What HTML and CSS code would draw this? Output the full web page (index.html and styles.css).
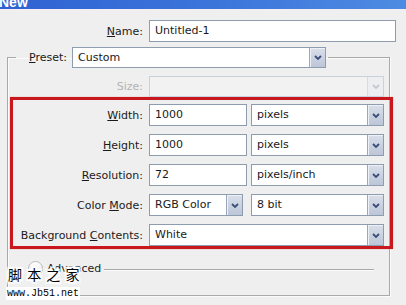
FILE: index.html
```html
<!DOCTYPE html>
<html>
<head>
<meta charset="utf-8">
<link rel="stylesheet" href="styles.css">
</head>
<body>
<div class="window">
  <div class="titlebar"><span class="title">New</span></div>

  <div class="row name-row">
    <span class="lbl name-lbl"><u>N</u>ame:</span>
    <div class="input name-input">Untitled-1</div>
  </div>

  <fieldset class="group">
    <legend class="preset">
      <span class="lbl-inline"><u>P</u>reset:</span>
      <div class="select preset-select">
        <span class="val">Custom</span>
        <span class="btn"><svg width="8" height="5" viewBox="0 0 8 5"><path d="M1 1 L4 4 L7 1" fill="none" stroke="currentColor" stroke-width="1.8"/></svg></span>
      </div>
    </legend>

    <div class="row size-row">
      <span class="lbl g-lbl disabled">Size:</span>
      <div class="select full disabled-select">
        <span class="val"></span>
        <span class="btn"><svg width="8" height="5" viewBox="0 0 8 5"><path d="M1 1 L4 4 L7 1" fill="none" stroke="currentColor" stroke-width="1.8"/></svg></span>
      </div>
    </div>

    <div class="redbox">
      <div class="row">
        <span class="lbl r-lbl"><u>W</u>idth:</span>
        <div class="input num">1000</div>
        <div class="select unit">
          <span class="val">pixels</span>
          <span class="btn"><svg width="8" height="5" viewBox="0 0 8 5"><path d="M1 1 L4 4 L7 1" fill="none" stroke="currentColor" stroke-width="1.8"/></svg></span>
        </div>
      </div>
      <div class="row">
        <span class="lbl r-lbl"><u>H</u>eight:</span>
        <div class="input num">1000</div>
        <div class="select unit">
          <span class="val">pixels</span>
          <span class="btn"><svg width="8" height="5" viewBox="0 0 8 5"><path d="M1 1 L4 4 L7 1" fill="none" stroke="currentColor" stroke-width="1.8"/></svg></span>
        </div>
      </div>
      <div class="row">
        <span class="lbl r-lbl"><u>R</u>esolution:</span>
        <div class="input num">72</div>
        <div class="select unit">
          <span class="val">pixels/inch</span>
          <span class="btn"><svg width="8" height="5" viewBox="0 0 8 5"><path d="M1 1 L4 4 L7 1" fill="none" stroke="currentColor" stroke-width="1.8"/></svg></span>
        </div>
      </div>
      <div class="row">
        <span class="lbl r-lbl">Color <u>M</u>ode:</span>
        <div class="select mode">
          <span class="val">RGB Color</span>
          <span class="btn"><svg width="8" height="5" viewBox="0 0 8 5"><path d="M1 1 L4 4 L7 1" fill="none" stroke="currentColor" stroke-width="1.8"/></svg></span>
        </div>
        <div class="select bits">
          <span class="val">8 bit</span>
          <span class="btn"><svg width="8" height="5" viewBox="0 0 8 5"><path d="M1 1 L4 4 L7 1" fill="none" stroke="currentColor" stroke-width="1.8"/></svg></span>
        </div>
      </div>
      <div class="row">
        <span class="lbl r-lbl">Background <u>C</u>ontents:</span>
        <div class="select full">
          <span class="val">White</span>
          <span class="btn"><svg width="8" height="5" viewBox="0 0 8 5"><path d="M1 1 L4 4 L7 1" fill="none" stroke="currentColor" stroke-width="1.8"/></svg></span>
        </div>
      </div>
    </div>

    <div class="advanced">
      <span class="adv-icon"></span>
      <span class="adv-text">Advanced</span>
      <span class="adv-line"></span>
    </div>
  </fieldset>

  <div class="wm-cn">脚 本 之 家</div>
  <div class="wm-url">www.Jb51.net</div>
</div>
</body>
</html>
```

FILE: styles.css
```css
* { box-sizing: border-box; }
html, body {
  margin: 0;
  padding: 0;
}
body {
  width: 406px;
  height: 305px;
  overflow: hidden;
  background: #efefef;
  font-family: "DejaVu Sans", sans-serif;
  font-size: 11px;
  color: #1a1a1a;
}
.window {
  position: relative;
  width: 406px;
  height: 305px;
}
.titlebar {
  height: 10px;
  overflow: hidden;
  background: linear-gradient(to right, #2e62d2, #3b74da 50%, #4d8be2);
  border-bottom: 1px solid #f6eef2;
}
.title {
  display: block;
  margin-top: -6px;
  margin-left: -1px;
  font-family: "Liberation Sans", sans-serif;
  font-weight: bold;
  font-size: 14px;
  line-height: 16px;
  color: #fff;
}
.row {
  display: flex;
  align-items: center;
}
.lbl {
  text-align: right;
  white-space: nowrap;
  flex: none;
}
u { text-decoration: underline; text-underline-offset: 1px; }

.name-row {
  margin-top: 10px;
  gap: 6px;
}
.name-lbl { width: 143px; }
.input {
  height: 22px;
  background: #fff;
  border: 1px solid #8e9cb0;
  padding: 0 5px;
  line-height: 20px;
  white-space: nowrap;
  overflow: hidden;
  flex: none;
}
.name-input { width: 247px; }

.group {
  margin: 5px 0 0 7px;
  padding: 0;
  width: 383px;
  height: 249px;
  border: 1px solid #a9a9a9;
  box-shadow: inset 1px 1px 0 #fbfbfb, 1px 1px 0 #fbfbfb;
  min-width: 0;
}
.preset {
  display: flex;
  align-items: center;
  gap: 5px;
  margin-left: 8px;
  padding: 0 2px 0 13px;
}
.select {
  display: flex;
  height: 21px;
  background: #fff;
  border: 1px solid #8e9cb0;
  flex: none;
}
.select .val {
  flex: 1;
  padding-left: 5px;
  line-height: 19px;
  white-space: nowrap;
  overflow: hidden;
}
.select .btn {
  width: 16px;
  border-left: 1px solid #9aa6bd;
  background: linear-gradient(#d9dfea, #bcc6d8);
  color: #3c4d78;
  display: flex;
  align-items: center;
  justify-content: center;
  box-shadow: inset 1px 1px 0 #eef1f6;
}
.preset-select { width: 254px; }

.size-row {
  margin-top: 8px;
  gap: 6px;
}
.g-lbl { width: 135px; }
.disabled { color: #b3b3b3; }
.disabled-select {
  width: 235px;
  border-color: #c9d1dc;
  background: #f2f2f2;
}
.disabled-select .btn {
  border-left-color: #d6dbe3;
  background: #eceef2;
  color: #c4c9d2;
  box-shadow: none;
}

.redbox {
  margin-left: 2px;
  width: 383px;
  border: 3px solid #c9181d;
  box-shadow: 0 0 1px rgba(210, 40, 40, 0.5);
  padding: 4px 0 0 0;
  display: flex;
  flex-direction: column;
  gap: 8px;
}
.redbox .row { gap: 6px; }
.r-lbl { width: 130px; }
.redbox .input, .redbox .select { height: 22px; }
.redbox .select .val { line-height: 20px; }
.num { width: 98px; margin-right: -2px; }
.unit { width: 133px; }
.mode { width: 94px; margin-right: 2px; }
.bits { width: 133px; }
.full { width: 235px; }

.advanced {
  display: flex;
  align-items: center;
  margin-top: 12px;
  padding-left: 20px;
  padding-right: 15px;
  height: 15px;
}
.adv-icon {
  width: 15px;
  height: 15px;
  border-radius: 50%;
  border: 1px solid #b8b8b8;
  background: linear-gradient(#ffffff, #e6e6e6);
  flex: none;
}
.adv-text {
  margin-left: 4px;
  line-height: 15px;
}
.adv-line {
  flex: 1;
  margin-left: 3px;
  height: 2px;
  border-top: 1px solid #a9a9a9;
  border-bottom: 1px solid #fbfbfb;
  margin-top: 2px;
}

.wm-cn {
  position: absolute;
  left: 8px;
  top: 264px;
  font-family: "Noto Sans CJK SC", sans-serif;
  font-size: 14px;
  line-height: 20px;
  color: #000;
  letter-spacing: 1px;
  text-shadow:
    1px 0 0 #fff, -1px 0 0 #fff, 0 1px 0 #fff, 0 -1px 0 #fff,
    2px 0 1px #fff, -2px 0 1px #fff, 0 2px 1px #fff, 0 -2px 1px #fff,
    2px 2px 1px #fff, -2px -2px 1px #fff, 2px -2px 1px #fff, -2px 2px 1px #fff;
}
.wm-url {
  position: absolute;
  left: 6px;
  top: 287px;
  padding: 0 1px;
  background: #fff;
  font-family: "Liberation Mono", monospace;
  font-size: 10px;
  line-height: 13px;
  color: #000;
}
```
